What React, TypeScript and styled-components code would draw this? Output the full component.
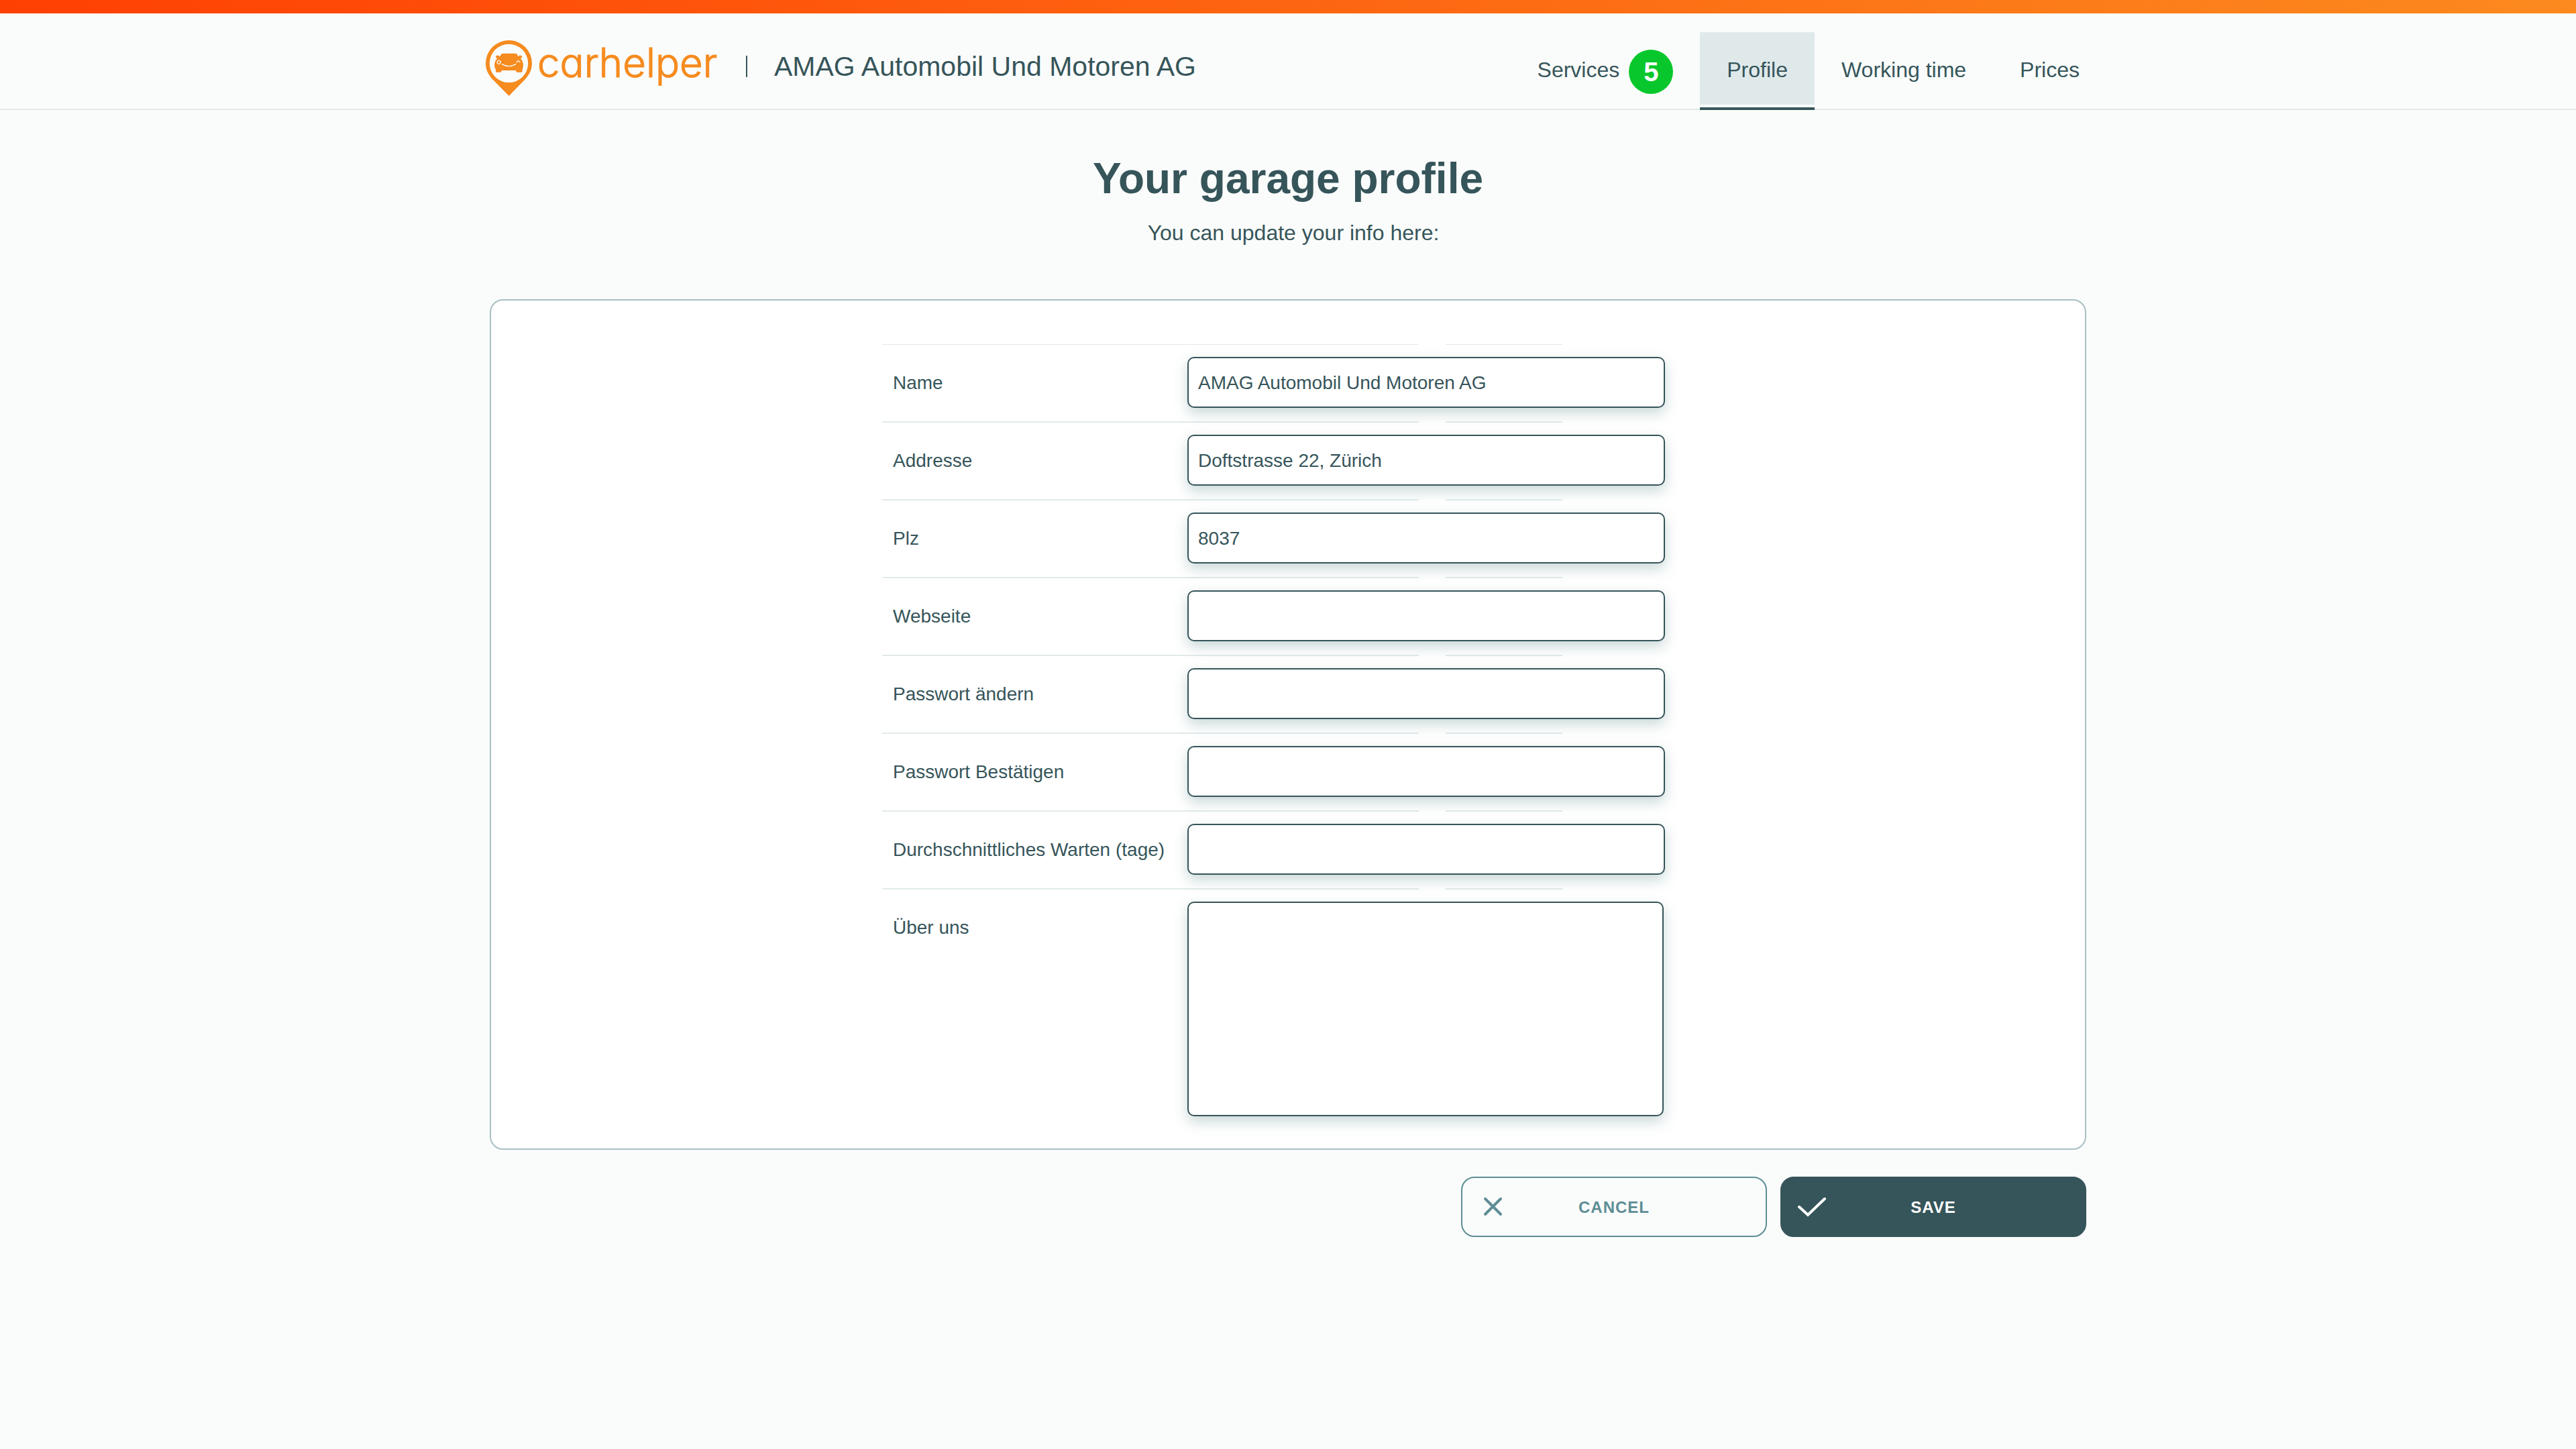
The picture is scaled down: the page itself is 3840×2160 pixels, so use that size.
import React from "react";
import styled, { createGlobalStyle, css } from "styled-components";

const color = {
  page: "#fafcfb",
  ink: "#36555a",
  accent: "#5e8d96",
  brand: "#f68b1f",
  line: "#e0e9ea",
  cardLine: "#a7bfc4",
  badge: "#08c72c",
};

const GlobalStyle = createGlobalStyle`
  *, *::before, *::after { box-sizing: border-box; }
  body {
    margin: 0;
    background: ${color.page};
    color: ${color.ink};
    font-family: "Liberation Sans", Arial, sans-serif;
    font-size: 28px;
    line-height: 32px;
  }
`;

const Page = styled.div`
  min-height: 100vh;
`;

const TopBar = styled.div`
  height: 20px;
  background: linear-gradient(90deg, #ff4003, #fc8a1f);
`;

const Header = styled.header`
  border-bottom: 2px solid ${color.line};
`;

const container = css`
  width: 100%;
  max-width: 2380px;
  margin: 0 auto;
`;

const HeaderInner = styled.div`
  ${container}
  display: flex;
  justify-content: space-between;
  height: 142px;
`;

const Brand = styled.div`
  display: flex;
  align-items: flex-start;
  padding-top: 40px;
  margin-left: -6px;
`;

const LogoLink = styled.a`
  display: flex;
  gap: 8px;
  width: 388px;
  color: ${color.brand};
  text-decoration: none;
`;

const LogoPin = styled.svg`
  flex: none;
  width: 69px;
  height: 83px;
`;

const LogoWord = styled.span`
  font-family: Inter, sans-serif;
  font-size: 60px;
  font-weight: 300;
  line-height: 66px;
  font-feature-settings: "cv11";
  -webkit-text-stroke: 1px ${color.brand};
  stroke-linejoin: round;
`;

const GarageName = styled.div`
  margin-top: 23px;
  padding-left: 40px;
  border-left: 2px solid ${color.ink};
  font-size: 41px;
  line-height: 32px;
  white-space: nowrap;
`;

const Nav = styled.nav`
  display: flex;
  margin: 28px -30px -2px 0;
`;

const Tab = styled.a<{ $active?: boolean }>`
  display: flex;
  align-items: center;
  gap: 14px;
  padding: 0 40px;
  border-bottom: 4px solid ${(p) => (p.$active ? color.ink : "transparent")};
  background: ${(p) =>
    p.$active ? `linear-gradient(${color.line}, ${color.line}) 0 0 / 100% 108px no-repeat` : "none"};
  color: inherit;
  font-size: 32px;
  line-height: 36px;
  text-decoration: none;
  white-space: nowrap;
`;

const Badge = styled.span`
  display: flex;
  align-items: center;
  justify-content: center;
  width: 66px;
  height: 66px;
  margin-top: 6px;
  border-radius: 50%;
  background: ${color.badge};
  color: #fff;
  font-size: 40px;
  font-weight: 700;
`;

const Main = styled.main`
  ${container}
  padding: 64px 0;
`;

const Title = styled.h1`
  margin: 0;
  font-size: 64px;
  line-height: 76px;
  text-align: center;
`;

const Subtitle = styled.p`
  margin: 24px 0 80px;
  padding-left: 16px;
  font-size: 32px;
  line-height: 38px;
  text-align: center;
`;

const Card = styled.div`
  padding: 64px 0 48px;
  border: 2px solid ${color.cardLine};
  border-radius: 20px;
  background: #fff;
`;

const Fields = styled.div`
  width: 100%;
  max-width: 1210px;
  margin: 0 auto;
`;

const Row = styled.div`
  display: grid;
  grid-template-columns: 439px 712px;
  column-gap: 16px;
  padding: 20px 0;
  background:
    linear-gradient(#e2eaea, #e2eaea) 0 0 / 800px 2px no-repeat,
    linear-gradient(#e2eaea, #e2eaea) 840px 0 / 174px 2px no-repeat;

  &:first-child {
    background:
      linear-gradient(#e6e8e8, #e6e8e8) 0 1px / 800px 1px no-repeat,
      linear-gradient(#e6e8e8, #e6e8e8) 840px 1px / 174px 1px no-repeat;
  }

  &:last-child {
    padding-bottom: 0;
  }
`;

const Label = styled.label`
  padding: 23px 16px 21px;
  white-space: nowrap;
`;

const control = css`
  display: block;
  border: 2px solid ${color.ink};
  border-radius: 10px;
  background: #fff;
  box-shadow: 0 8px 20px rgba(45, 100, 100, 0.25);
  color: inherit;
  font: inherit;
  outline: none;
`;

const TextInput = styled.input`
  ${control}
  width: 100%;
  height: 76px;
  padding: 2px 14px 0;
`;

const TextArea = styled.textarea`
  ${control}
  width: 710px;
  height: 320px;
  padding: 20px 14px;
  resize: none;
`;

const Actions = styled.div`
  display: flex;
  justify-content: flex-end;
  gap: 20px;
  margin-top: 40px;
`;

const Button = styled.button<{ $primary?: boolean }>`
  display: grid;
  grid-template-columns: 1fr auto 1fr;
  align-items: center;
  width: 456px;
  height: 90px;
  padding: 2px 24px 0;
  border: 2px solid ${(p) => (p.$primary ? color.ink : color.accent)};
  border-radius: 20px;
  background: ${(p) => (p.$primary ? color.ink : "transparent")};
  color: ${(p) => (p.$primary ? "#fff" : color.accent)};
  font: 700 24px/28px "Liberation Sans", Arial, sans-serif;
  letter-spacing: 1px;
  text-transform: uppercase;
`;

const ButtonIcon = styled.svg`
  width: 42px;
  height: 32px;
  fill: none;
  stroke: currentColor;
  stroke-width: 4;
  stroke-linecap: round;
`;

const fields = [
  { id: "name", label: "Name", type: "text", value: "AMAG Automobil Und Motoren AG" },
  { id: "address", label: "Addresse", type: "text", value: "Doftstrasse 22, Zürich" },
  { id: "zip", label: "Plz", type: "text", value: "8037" },
  { id: "website", label: "Webseite", type: "text", value: "" },
  { id: "password", label: "Passwort ändern", type: "password", value: "" },
  { id: "password-confirm", label: "Passwort Bestätigen", type: "password", value: "" },
  { id: "waiting", label: "Durchschnittliches Warten (tage)", type: "text", value: "" },
];

function Logo() {
  return (
    <LogoLink href="#">
      <LogoPin viewBox="0 0 69 83" aria-hidden="true">
        <path
          fill={color.brand}
          fillRule="evenodd"
          d="M34.5 0A34.5 34.5 0 0 1 69 34.5C69 44 65 51 59.5 57.5L34.7 83L9.5 57.5C4 51 0 44 0 34.5A34.5 34.5 0 0 1 34.5 0ZM34.5 5.7A28.7 28.7 0 1 0 34.5 63.1A28.7 28.7 0 1 0 34.5 5.7Z"
        />
        <path
          fill={color.brand}
          d="M25.5 19.8H45Q46.3 20 47 21.5L48.6 24.6Q49.3 22.6 51.3 22.6Q54.3 22.8 54.3 25Q54 26.8 51.8 27.1Q55.6 30.5 56 37Q56 41 54.6 43.5V46.5Q54.6 47.8 53.3 47.8H46.6Q45.4 47.8 45.4 46.5V45.1H23.4V46.5Q23.4 47.8 22.2 47.8H16.2Q15 47.8 15 46.5V43.5Q13 41 13 37Q13.4 30.5 17.4 27.1Q15.2 26.8 15 25Q15 22.8 18 22.6Q20 22.6 20.8 24.6L23 21.2Q24 19.8 25.5 19.8Z"
        />
        <g fill="none" stroke={color.page} strokeWidth="1.3" strokeLinecap="round">
          <circle cx="19.7" cy="32.8" r="2.5" />
          <path d="M46.4 33.2Q46.8 30.8 49 30.9Q50.8 31 51 32.8" />
          <path d="M24.4 35.6Q34.5 41.8 44.7 35.6" />
        </g>
      </LogoPin>
      <LogoWord>carhelper</LogoWord>
    </LogoLink>
  );
}

export default function App() {
  return (
    <Page>
      <GlobalStyle />
      <TopBar />
      <Header>
        <HeaderInner>
          <Brand>
            <Logo />
            <GarageName>AMAG Automobil Und Motoren AG</GarageName>
          </Brand>
          <Nav>
            <Tab href="#">
              Services <Badge>5</Badge>
            </Tab>
            <Tab href="#" $active aria-current="page">
              Profile
            </Tab>
            <Tab href="#">Working time</Tab>
            <Tab href="#">Prices</Tab>
          </Nav>
        </HeaderInner>
      </Header>
      <Main>
        <Title>Your garage profile</Title>
        <Subtitle>You can update your info here:</Subtitle>
        <form onSubmit={(e) => e.preventDefault()}>
          <Card>
            <Fields>
              {fields.map((f) => (
                <Row key={f.id}>
                  <Label htmlFor={f.id}>{f.label}</Label>
                  <TextInput id={f.id} type={f.type} defaultValue={f.value} />
                </Row>
              ))}
              <Row>
                <Label htmlFor="about">Über uns</Label>
                <TextArea id="about" />
              </Row>
            </Fields>
          </Card>
          <Actions>
            <Button type="button">
              <ButtonIcon viewBox="0 0 42 32" aria-hidden="true">
                <path d="M10 3L33 26M33 3L10 26" />
              </ButtonIcon>
              Cancel
            </Button>
            <Button type="submit" $primary>
              <ButtonIcon viewBox="0 0 42 32" aria-hidden="true">
                <path d="M2 15L15 27L40 3" />
              </ButtonIcon>
              Save
            </Button>
          </Actions>
        </form>
      </Main>
    </Page>
  );
}
